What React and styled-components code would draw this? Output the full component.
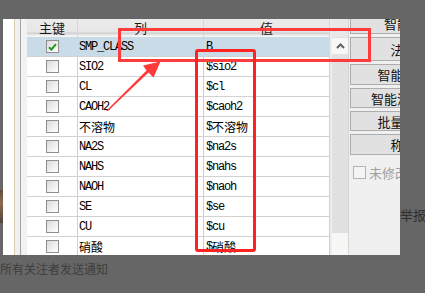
import React from "react";
import styled, { createGlobalStyle } from "styled-components";

const Global = createGlobalStyle`
  html, body { margin: 0; padding: 0; background: #666666; }
  body { width: 425px; height: 293px; overflow: hidden; font-family: "Noto Sans CJK SC", sans-serif; }
`;

const Page = styled.div`
  position: relative;
  width: 425px;
  height: 293px;
  padding-top: 19px;
  box-sizing: border-box;
  display: flex;
  flex-direction: column;
  overflow: hidden;
`;

const Stage = styled.div`
  display: flex;
  height: 236px;
  flex: none;
`;

const Gutter = styled.div`
  width: 3px;
  padding-top: 171px;
  box-sizing: border-box;
  flex: none;
`;

const Photo = styled.div`
  width: 3px;
  height: 33px;
  background: linear-gradient(#5e4d42, #8b6a50 40%, #6e5545 70%, #4f4440);
`;

const Dialog = styled.div`
  width: 397px;
  flex: none;
  display: flex;
  overflow: hidden;
  background: #f0f0f0;
`;

const Margin = styled.div`
  width: 11px;
  background: #ffffff;
  border-right: 1px solid #d8ceb2;
  flex: none;
`;

const Spacer = styled.div`
  width: 5px;
  background: #f0f0f0;
  flex: none;
`;

const GridFrame = styled.div`
  display: flex;
  border-left: 1px solid #a3a3a3;
  flex: none;
`;

const RowHeaders = styled.div`
  width: 6px;
  background: #f2f2f2;
  flex: none;
`;

const Table = styled.div`
  display: grid;
  grid-template-columns: 51px 126px 126px;
  grid-template-rows: 18px;
  grid-auto-rows: 20px;
  align-content: start;
  background: #ffffff;
`;

const HeadCell = styled.div`
  box-sizing: border-box;
  border-right: 1px solid #d6d6d6;
  background: linear-gradient(to bottom, #ebebeb 0, #e7e7e7 13px, #cfcfcf 14px, #d8d8d8 15px, #eeeeee 16px, #f7f7f7 18px);
  display: flex;
  justify-content: center;
  align-items: flex-start;
  padding-top: 1px;
  font-family: "Noto Sans CJK SC", sans-serif;
  font-size: 13px;
  line-height: 16px;
  color: #1a1a1a;
`;

const Cell = styled.div`
  box-sizing: border-box;
  border-right: 1px solid ${(p) => (p.$sel ? "#c8dbe7" : "#d0d0d0")};
  border-bottom: 1px solid #d2d2d2;
  background: ${(p) => (p.$sel ? "#c8dbe7" : "#ffffff")};
  display: flex;
  align-items: center;
  justify-content: ${(p) => (p.$center ? "center" : "flex-start")};
  padding-left: ${(p) => p.$pad || 0}px;
  font-family: "Liberation Mono", monospace;
  font-size: 12px;
  letter-spacing: -1.2px;
  color: #000000;
  white-space: nowrap;
  overflow: hidden;
`;

const Cjk = styled.span`
  font-family: "Noto Sans CJK SC", sans-serif;
  font-size: 12px;
  letter-spacing: 0;
  line-height: 14px;
`;

const Box = styled.div`
  width: 13px;
  height: 13px;
  box-sizing: border-box;
  border: 1px solid #8f8f8f;
  background: linear-gradient(135deg, #dadada 0%, #f0f0f0 55%, #ffffff 100%);
  display: flex;
  align-items: center;
  justify-content: center;
  margin-left: 1px;
`;

const ScrollCol = styled.div`
  width: 19px;
  box-sizing: border-box;
  border-left: 2px solid #ececec;
  border-right: 1px solid #d5d5d5;
  background: #e1e1e1;
  display: flex;
  flex-direction: column;
  flex: none;
`;

const ScrollCap = styled.div`
  height: 18px;
  background: #e8e8e8;
  flex: none;
`;

const ScrollUp = styled.div`
  height: 16px;
  margin-top: 1px;
  background: #f7f7f7;
  display: flex;
  align-items: center;
  justify-content: center;
  flex: none;
`;

const ScrollTrack = styled.div`
  flex: 1;
`;

const ScrollThumb = styled.div`
  height: 22px;
  background: #f7f7f5;
  flex: none;
`;

const Panel = styled.div`
  width: 51px;
  flex: none;
  margin-top: -7px;
  padding-left: 1px;
  display: flex;
  flex-direction: column;
  gap: 3px;
`;

const Button = styled.div`
  width: 94px;
  height: ${(p) => p.$h}px;
  box-sizing: border-box;
  flex: none;
  border: 1px solid #adadad;
  background: #e1e1e1;
  display: flex;
  align-items: center;
  justify-content: center;
  font-family: "Noto Sans CJK SC", sans-serif;
  font-size: 13px;
  color: #111111;
  white-space: nowrap;
`;

const CheckRow = styled.div`
  margin-top: 5px;
  padding-left: 3px;
  display: flex;
  align-items: center;
  gap: 3px;
  font-family: "Noto Sans CJK SC", sans-serif;
  font-size: 13px;
  color: #a0a0a0;
  white-space: nowrap;
`;

const DisabledBox = styled.div`
  width: 13px;
  height: 13px;
  box-sizing: border-box;
  border: 1px solid #b4b4b4;
  background: #f4f4f4;
  flex: none;
`;

const Side = styled.div`
  flex: 1;
  padding-top: 188px;
  font-family: "Noto Sans CJK SC", sans-serif;
  font-size: 13px;
  line-height: 16px;
  color: #2e2e2e;
  white-space: nowrap;
  overflow: hidden;
`;

const Caption = styled.div`
  margin-top: 6px;
  font-family: "Noto Sans CJK SC", sans-serif;
  font-size: 12px;
  line-height: 16px;
  color: #3e3e3e;
  white-space: nowrap;
`;

const Marks = styled.svg`
  position: absolute;
  left: 0;
  top: 0;
  pointer-events: none;
`;

const isCjk = (ch) => /[\u3400-\u9fff]/.test(ch);

function Mixed({ text }) {
  const parts = [];
  let buf = "";
  let mode = null;
  for (const ch of text) {
    const m = isCjk(ch);
    if (mode !== null && m !== mode) {
      parts.push([mode, buf]);
      buf = "";
    }
    mode = m;
    buf += ch;
  }
  if (buf) parts.push([mode, buf]);
  return parts.map(([m, t], i) => (m ? <Cjk key={i}>{t}</Cjk> : <span key={i}>{t}</span>));
}

const rows = [
  ["SMP_CLASS", "B", true],
  ["SIO2", "$sio2"],
  ["CL", "$cl"],
  ["CAOH2", "$caoh2"],
  ["不溶物", "$不溶物"],
  ["NA2S", "$na2s"],
  ["NAHS", "$nahs"],
  ["NAOH", "$naoh"],
  ["SE", "$se"],
  ["CU", "$cu"],
  ["硝酸", "$硝酸"],
];

const buttons = [
  ["智能", 22],
  ["法", 24],
  ["智能匹", 21],
  ["智能涉及", 20],
  ["批量添", 20],
  ["称", 21],
];

function Check() {
  return (
    <svg width="9" height="8" viewBox="0 0 9 8">
      <path d="M1 4.2 L3.4 6.5 L8 1.2" fill="none" stroke="#1f9a1f" strokeWidth="2" />
    </svg>
  );
}

function Chevron() {
  return (
    <svg width="9" height="6" viewBox="0 0 9 6">
      <path d="M1 5 L4.5 1.5 L8 5" fill="none" stroke="#606060" strokeWidth="2" />
    </svg>
  );
}

export default function App() {
  return (
    <>
      <Global />
      <Page>
        <Stage>
          <Gutter>
            <Photo />
          </Gutter>
          <Dialog>
            <Margin />
            <Spacer />
            <GridFrame>
              <RowHeaders />
              <Table>
                <HeadCell>主键</HeadCell>
                <HeadCell>列</HeadCell>
                <HeadCell>值</HeadCell>
                {rows.map(([col, val, sel]) => (
                  <React.Fragment key={col}>
                    <Cell $sel={sel} $center>
                      <Box>{sel && <Check />}</Box>
                    </Cell>
                    <Cell $sel={sel} $pad={1}>
                      <Mixed text={col} />
                    </Cell>
                    <Cell $sel={sel} $pad={2}>
                      <Mixed text={val} />
                    </Cell>
                  </React.Fragment>
                ))}
              </Table>
              <ScrollCol>
                <ScrollCap />
                <ScrollUp>
                  <Chevron />
                </ScrollUp>
                <ScrollTrack />
                <ScrollThumb />
              </ScrollCol>
            </GridFrame>
            <Panel>
              {buttons.map(([label, h]) => (
                <Button key={label} $h={h}>
                  {label}
                </Button>
              ))}
              <CheckRow>
                <DisabledBox />
                未修改
              </CheckRow>
            </Panel>
          </Dialog>
          <Side>举报</Side>
        </Stage>
        <Caption>所有关注者发送通知</Caption>
        <Marks width="425" height="293" viewBox="0 0 425 293">
          <rect x="119.5" y="29.5" width="250" height="31" fill="none" stroke="#ff3b3b" strokeWidth="3" />
          <rect x="196.5" y="50.5" width="58" height="200" rx="1.5" fill="none" stroke="#ff2222" strokeWidth="3" />
          <polygon points="106,111 108,111 148.5,72.5 153.5,77.5 160.5,61.5 143,65.5 146.5,70.5" fill="#ff3a3a" />
        </Marks>
      </Page>
    </>
  );
}
